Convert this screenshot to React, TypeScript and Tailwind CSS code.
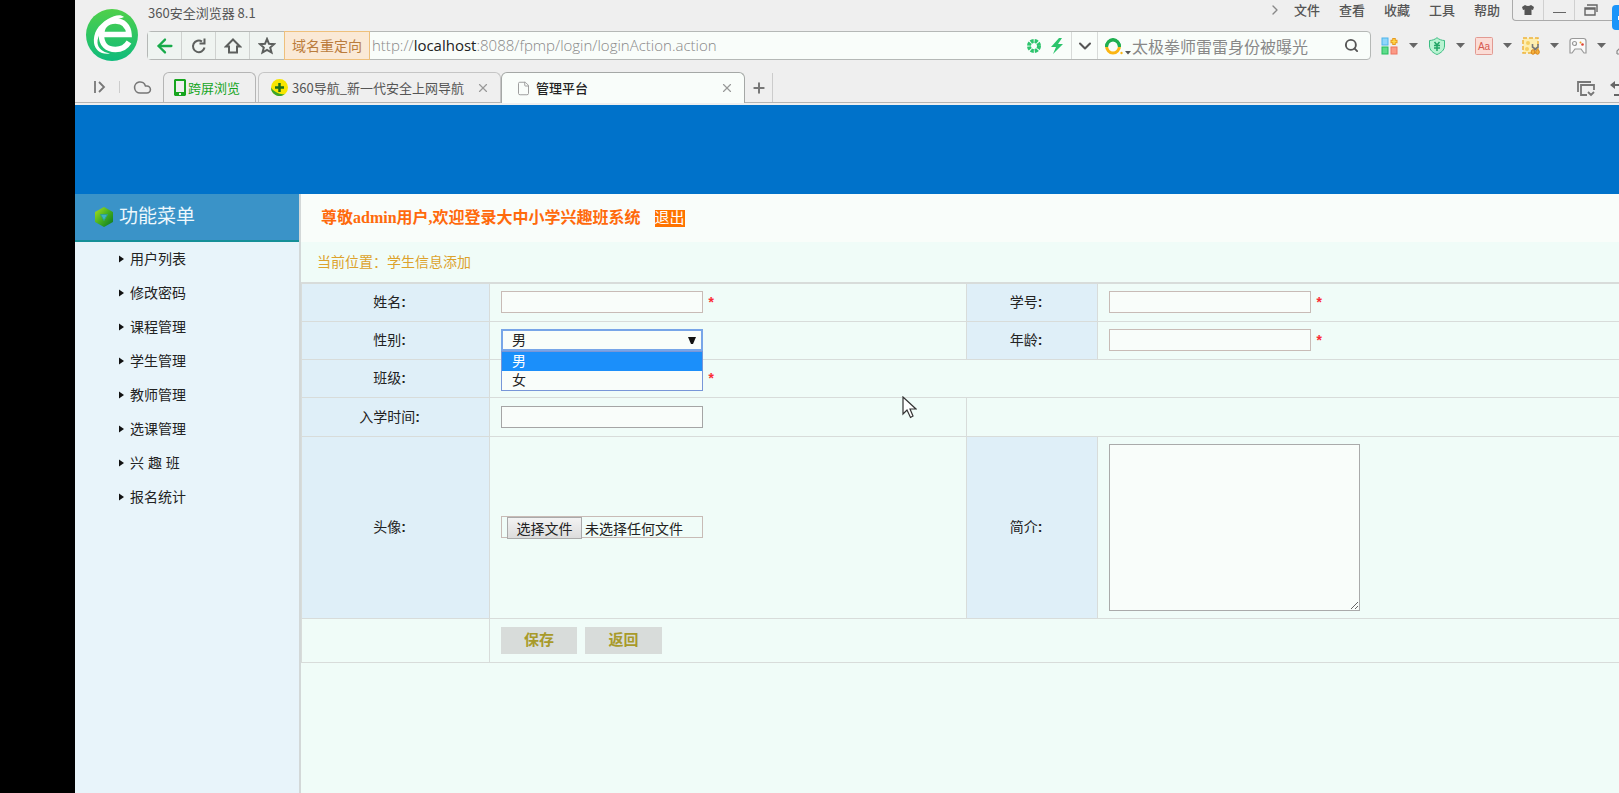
import React, { useState } from 'react';
import { ArrowLeft, ChevronDown, ChevronRight, Cloud, File, Plus, Search, X } from 'lucide-react';

const menus = ['文件', '查看', '收藏', '工具', '帮助'];

const sideItems = ['用户列表', '修改密码', '课程管理', '学生管理', '教师管理', '选课管理', '兴 趣 班', '报名统计'];

const genders = ['男', '女'];

const BrowserLogo = () => (
  <svg viewBox="0 0 52 52" className="size-[52px]">
    <defs>
      <linearGradient id="logo" x1="0" y1="0" x2="0" y2="1">
        <stop offset="0" stopColor="#4fd04a" />
        <stop offset="1" stopColor="#0fbb7c" />
      </linearGradient>
    </defs>
    <circle cx="26" cy="26" r="26" fill="url(#logo)" />
    <path
      d="M18 25.500H43C42.500 16.500 37 12 29.500 12C20.500 12 15.500 18 15.500 26.500C15.500 35.500 21 40.500 29.500 40.500C36 40.500 40 38 43 33"
      fill="none"
      stroke="#fff"
      strokeWidth="5.500"
    />
    <path d="M38 8C34 4.500 28 7 22 10C12 16 7 24 8 34C9 41 15 46 24 44.500C16 43 12 39 11.500 34C11 27 17 18 26 12.500C31 9.500 35 9.500 38 8Z" fill="#fff" />
  </svg>
);

const ReloadIcon = () => (
  <svg viewBox="0 0 18 18" className="size-[18px]" fill="none" stroke="#5c5f5d" strokeWidth="2">
    <path d="M14.500 10.500A5.800 5.800 0 1 1 12 4.500" />
    <path d="M9.500 6.500H14.500V1.500" />
  </svg>
);

const HomeIcon = () => (
  <svg viewBox="0 0 18 18" className="size-[18px]" fill="none" stroke="#5c5f5d" strokeWidth="2">
    <path d="M9 2.500L16 9.500H13V15.500H5V9.500H2Z" />
  </svg>
);

const StarIcon = () => (
  <svg viewBox="0 0 18 18" className="size-[18px]" fill="none" stroke="#5c5f5d" strokeWidth="2">
    <path d="M9 2L11 6.800L16 7.200L12.200 10.500L13.500 15.500L9 12.800L4.500 15.500L5.800 10.500L2 7.200L7 6.800Z" />
  </svg>
);

const Caret = () => (
  <svg viewBox="0 0 9 5" className="h-[5px] w-[9px] shrink-0">
    <path d="M0 0H9L4.500 5Z" fill="#666" />
  </svg>
);

const AppsIcon = () => (
  <svg viewBox="0 0 18 18" className="size-[18px]">
    <rect x="1" y="1" width="6" height="7" fill="#8fd6fa" stroke="#4db4ec" />
    <rect x="1" y="10" width="6" height="7" fill="#5fdc8c" stroke="#23bd5c" />
    <rect x="10" y="10" width="6" height="7" fill="#fb9a86" stroke="#ee7460" />
    <path d="M13 1V8M9.500 4.500H16.500" stroke="#e89a1c" strokeWidth="3.500" />
    <path d="M13 2V7M10.500 4.500H15.500" stroke="#ffd84a" strokeWidth="1.500" />
  </svg>
);

const ShieldIcon = () => (
  <svg viewBox="0 0 18 18" className="size-[18px]" fill="none" stroke="#22a565">
    <path d="M9 .7C11 2.500 14 3.500 16.500 3.500V9C16.500 13 13 16 9 17.500C5 16 1.500 13 1.500 9V3.500C4 3.500 7 2.500 9 .7Z" fill="#b9f3d2" stroke="#3dbd83" />
    <path d="M6.500 5L9 8L11.500 5M6 8.500H12M6 11H12M9 8V14" strokeWidth="1.500" />
  </svg>
);

const TranslateIcon = () => (
  <svg viewBox="0 0 18 18" className="size-[18px]">
    <rect x=".5" y=".5" width="17" height="17" rx="1" fill="#fbdcd6" stroke="#e29a92" />
    <text x="9" y="13" textAnchor="middle" fontSize="10" fontFamily="Liberation Sans, sans-serif" fill="#d6584e">Aa</text>
  </svg>
);

const CaptureIcon = () => (
  <svg viewBox="0 0 18 18" className="size-[18px]">
    <rect x="1" y="1" width="15" height="15" fill="#fdeeb0" stroke="#eeb43c" strokeWidth="1.500" strokeDasharray="4 2" />
    <circle cx="6" cy="6" r="2" fill="#f6cf61" />
    <circle cx="5" cy="12" r="2" fill="#f6cf61" />
    <path d="M10.500 7V10L14.500 13M16 7V10L12 13" fill="none" stroke="#777" strokeWidth="1.600" />
    <ellipse cx="11" cy="15" rx="1.800" ry="2.300" fill="#f6b23c" stroke="#d8841c" />
    <ellipse cx="15.500" cy="15" rx="1.800" ry="2.300" fill="#f6b23c" stroke="#d8841c" />
  </svg>
);

const GameIcon = () => (
  <svg viewBox="0 0 18 18" className="size-[18px]" fill="none" stroke="#999" strokeWidth="1.200">
    <path d="M1 16V4C1 2.500 2 1.500 3.500 1.500H14.500C16 1.500 17 2.500 17 4V16H15L12 12H6L3 16Z" fill="#fafafa" />
    <circle cx="5.500" cy="6.500" r="2" />
    <circle cx="11.500" cy="5.500" r="1" fill="#e8a020" stroke="none" />
    <circle cx="13.500" cy="7.500" r="1.300" fill="#e04030" stroke="none" />
  </svg>
);

const tools = [
  { name: '应用', icon: <AppsIcon /> },
  { name: '网银', icon: <ShieldIcon /> },
  { name: '翻译', icon: <TranslateIcon /> },
  { name: '截图', icon: <CaptureIcon /> },
  { name: '游戏', icon: <GameIcon /> },
];

const Browser = () => (
  <header className="h-[105px] overflow-hidden bg-[#efefef] font-['Noto_Sans_CJK_SC',sans-serif] text-[13px] text-[#555]">
    <div className="flex h-[72px]">
      <div className="w-[72px] shrink-0 pt-[9px] pl-[11px]">
        <BrowserLogo />
      </div>
      <div className="min-w-0 flex-1">
        <div className="flex h-[31px] items-start">
          <span className="pt-[3px] pl-px leading-[20px]">360安全浏览器 8.1</span>
          <nav className="ml-auto flex h-5 shrink-0 items-center gap-[19px] pr-3">
            <ChevronRight size={16} className="-mr-2 text-[#888]" />
            {menus.map((m) => (
              <button key={m} type="button" className="leading-[20px] font-medium">{m}</button>
            ))}
          </nav>
          <div className="flex h-[21px] w-[107px] shrink-0 divide-x divide-[#d0d0d0] rounded-bl-sm border-b border-l border-[#aaa]">
            <button type="button" aria-label="皮肤" className="flex w-[31px] items-center justify-center">
              <svg viewBox="0 0 14 12" className="h-3 w-3.5">
                <path d="M4 1Q7 3 10 1L13 3L12 6L10.500 5.500V11H3.500V5.500L2 6L1 3Z" fill="#555" />
              </svg>
            </button>
            <button type="button" aria-label="最小化" className="flex w-[31px] items-end justify-center pb-[7px]">
              <span className="h-px w-[13px] bg-[#666]" />
            </button>
            <button type="button" aria-label="还原" className="flex w-[31px] items-center justify-center">
              <svg viewBox="0 0 14 12" className="h-3 w-3.5" fill="none" stroke="#666" strokeWidth="1.400">
                <path d="M3 1H13V8M1 4H11V11H1ZM1 5H11" />
              </svg>
            </button>
          </div>
        </div>

        <div className="flex items-center">
          <div className="flex h-[29px] min-w-0 flex-1 rounded-sm border border-[#b5b8b6] bg-[#f9fdfa]">
            <div className="flex shrink-0 divide-x divide-[#cfd2d0] bg-[#eff4f1]">
              <button type="button" aria-label="后退" className="flex w-[34px] items-center justify-center">
                <ArrowLeft size={22} strokeWidth={2.5} className="text-[#17ab4a]" />
              </button>
              <button type="button" aria-label="刷新" className="flex w-[34px] items-center justify-center"><ReloadIcon /></button>
              <button type="button" aria-label="主页" className="flex w-[34px] items-center justify-center"><HomeIcon /></button>
              <button type="button" aria-label="收藏" className="flex w-[34px] items-center justify-center"><StarIcon /></button>
            </div>
            <span className="-my-px flex w-[86px] shrink-0 items-center justify-center border border-[#eec07c] bg-[#fae9d6] text-[14px] text-[#ba7c3c]">
              域名重定向
            </span>
            <div className="min-w-0 flex-1 truncate pl-[2px] font-['Open_Sans','Noto_Sans_CJK_SC',sans-serif] text-[15px] leading-[27px] font-light text-[#888]">
              http://<span className="font-normal text-[#222]">localhost</span>:8088/fpmp/login/loginAction.action
            </div>
            <div className="flex w-[45px] shrink-0 items-center gap-[8px]">
              <svg viewBox="0 0 16 16" className="size-4">
                <circle cx="8" cy="8" r="5" fill="none" stroke="#2cc46c" strokeWidth="4" strokeDasharray="3 .927" />
              </svg>
              <svg viewBox="0 0 14 16" className="h-4 w-3.5">
                <path d="M9 0L1 9H6L3 16L13 6H8L12 0Z" fill="#2cc46c" />
              </svg>
            </div>
            <button type="button" aria-label="地址列表" className="flex w-[27px] shrink-0 items-center justify-center border-x border-[#d8dbd9]">
              <ChevronDown size={20} strokeWidth={2.5} />
            </button>
            <div className="flex w-[272px] shrink-0 items-center pl-[7px]">
              <svg viewBox="0 0 26 18" className="h-[18px] w-[26px] shrink-0" fill="none" strokeWidth="3">
                <path d="M1.500 10A6.500 7 0 0 1 14.500 10" stroke="#1faf50" />
                <path d="M1.500 9A6.500 7 0 0 0 14.500 9" stroke="#fbb614" />
                <path d="M1.500 10A6.500 7.500 0 0 1 14.500 10" stroke="#1faf50" />
                <circle cx="16.500" cy="16" r="1.200" fill="#fbb614" />
                <path d="M20 14H26L23 17.500Z" fill="#555" />
              </svg>
              <input
                aria-label="搜索"
                placeholder="太极拳师雷雷身份被曝光"
                className="min-w-0 flex-1 bg-transparent pl-px text-[16px] leading-[24px] placeholder:text-[#888]"
              />
              <button type="button" aria-label="开始搜索" className="px-[11px]"><Search size={15} strokeWidth={3} /></button>
            </div>
          </div>
          <div className="flex w-[248px] shrink-0 items-center overflow-hidden pl-[10px]">
            {tools.map((t) => (
              <button key={t.name} type="button" aria-label={t.name} className="flex w-[47px] shrink-0 items-center gap-[10px]">
                {t.icon}
                <Caret />
              </button>
            ))}
            <svg viewBox="0 0 12 18" className="h-[18px] w-3 shrink-0" fill="none" stroke="#888" strokeWidth="1.200">
              <path d="M1 17V14L4 11M1 17H12" />
            </svg>
          </div>
        </div>
      </div>
    </div>

    <div className="flex h-[31px] items-end border-b border-[#b5b5b5]">
      <div className="flex h-[30px] w-[88px] shrink-0 items-center">
        <svg viewBox="0 0 12 12" className="ml-[19px] h-3 w-3" fill="none" stroke="#777" strokeWidth="1.800">
          <path d="M1 0V12M5 1L10 6L5 11" />
        </svg>
        <span className="mx-[13px] h-3 w-px bg-[#ccc]" />
        <Cloud size={19} className="text-[#777]" />
      </div>
      <button type="button" className="flex h-[30px] w-[93px] shrink-0 items-center gap-[2px] rounded-t-md border border-b-0 border-[#b5b5b5] pl-[10px] text-[#16a51e]">
        <svg viewBox="0 0 12 17" className="h-[17px] w-3">
          <path d="M1 0H11L12 1V16L11 17H1L0 16V1ZM2 2V13H10V2ZM5 14V16H7V14Z" fill="#16a51e" fillRule="evenodd" />
        </svg>
        跨屏浏览
      </button>
      <div className="ml-[2px] flex h-[30px] w-[243px] shrink-0 items-center rounded-t-md border border-b-0 border-[#c5c5c5] pr-[10px] pl-[12px]">
        <svg viewBox="0 0 17 17" className="mr-1 size-[17px]">
          <circle cx="8.500" cy="8.500" r="8.500" fill="#f7e600" />
          <path d="M0 8.500A8.500 8.500 0 0 0 14 15C9 16 3 13 0 8.500Z" fill="#3aa52c" />
          <path d="M8.500 4V13M4 8.500H13" stroke="#1b6e1b" strokeWidth="2.500" />
        </svg>
        <span className="whitespace-nowrap">360导航_新一代安全上网导航</span>
        <button type="button" aria-label="关闭标签" className="ml-auto"><X size={14} className="text-[#999]" /></button>
      </div>
      <div className="-mb-px flex h-[31px] w-[244px] shrink-0 items-center rounded-t-md border border-b-0 border-[#a5a8a6] bg-[#f9fdfa] pr-[10px] pl-[14px]">
        <File size={15} strokeWidth={1.5} className="mr-[5px] text-[#999]" />
        <span className="font-medium text-[#222]">管理平台</span>
        <button type="button" aria-label="关闭标签" className="ml-auto"><X size={14} className="text-[#999]" /></button>
      </div>
      <button type="button" aria-label="新标签" className="flex h-[29px] w-[28px] shrink-0 items-center justify-center border-r border-[#ccc]">
        <Plus size={16} strokeWidth={3} className="text-[#777]" />
      </button>
      <div className="ml-auto flex h-[27px] w-[42px] shrink-0 items-center gap-[15px] overflow-hidden">
        <svg viewBox="0 0 18 16" className="h-4 w-[18px] shrink-0" fill="none" stroke="#777" strokeWidth="1.800">
          <path d="M1 11V1H14M10 14H4V4H17V9M11 11L14 14L17 11" />
        </svg>
        <svg viewBox="0 0 18 16" className="h-4 w-[18px] shrink-0" fill="#666">
          <path d="M0 4L5 0V3H16V15H4V13H14V5H5V8Z" />
        </svg>
      </div>
    </div>
  </header>
);

const Sidebar = () => (
  <aside className="w-[226px] shrink-0 border-r-2 border-[#d3d8d8] bg-[#e8f4fa]">
    <h2 className="flex h-12 items-center gap-[6px] border-b-2 border-[#158f98] bg-[#3a93c8] pl-5 text-[19px] text-[#eef8fc]">
      <svg viewBox="0 0 18 20" className="h-5 w-[18px]">
        <defs>
          <linearGradient id="hex" x1="0" y1="0" x2="1" y2="1">
            <stop offset="0" stopColor="#a4dc1c" />
            <stop offset=".5" stopColor="#45b020" />
            <stop offset="1" stopColor="#0c7a20" />
          </linearGradient>
        </defs>
        <path d="M9 1L17 5.500V14.500L9 19L1 14.500V5.500Z" fill="url(#hex)" stroke="url(#hex)" strokeWidth="2" strokeLinejoin="round" />
        <path d="M5.500 7.500H12.500L9 13.500Z" fill="#3eb4c0" stroke="#2fa089" strokeLinejoin="round" />
      </svg>
      功能菜单
    </h2>
    <ul>
      {sideItems.map((item) => (
        <li key={item}>
          <a href="#" className="flex h-[34px] items-center gap-[6px] pl-11 text-[14px] text-[#222]">
            <svg viewBox="0 0 5 8" className="h-2 w-[5px]">
              <path d="M0 0.500L5 4L0 7.500Z" fill="#111" />
            </svg>
            {item}
          </a>
        </li>
      ))}
    </ul>
  </aside>
);

const labelCell = 'border border-[#d8dcda] bg-[#dfeff8] pr-3 text-center font-normal';
const cell = 'border border-[#d8dcda] px-[11px]';
const field = 'h-[22px] w-[202px] border border-[#c8bbb6] bg-[#f9fdfa] px-2 align-middle';

const Star = () => <span className="ml-1 inline-block pt-1 align-middle font-['Liberation_Mono',monospace] font-bold text-red-500">*</span>;

const StudentForm = () => {
  const [gender, setGender] = useState('男');

  return (
    <form onSubmit={(e) => e.preventDefault()} className="overflow-hidden">
      {/* wider than its column, so the right edge runs out of the window */}
      <table className="-mr-3 w-[calc(100%+12px)] table-fixed border-collapse border-t-2 border-[#d8dcda] text-[14px] leading-[20px] text-[#222]">
        <colgroup>
          <col className="w-[188px]" />
          <col className="w-[477px]" />
          <col className="w-[131px]" />
          <col />
        </colgroup>
        <tbody>
          <tr className="h-[38px]">
            <th className={labelCell}><label htmlFor="name">姓名<b>:</b></label></th>
            <td className={cell}><input id="name" className={field} /><Star /></td>
            <th className={labelCell}><label htmlFor="no">学号<b>:</b></label></th>
            <td className={cell}><input id="no" className={field} /><Star /></td>
          </tr>
          <tr className="h-[38px]">
            <th className={labelCell}><label htmlFor="gender">性别<b>:</b></label></th>
            <td className={cell}>
              <div className="relative w-[202px]">
                <select
                  id="gender"
                  value={gender}
                  onChange={(e) => setGender(e.target.value)}
                  className="block h-[22px] w-full appearance-none border-2 border-[#78a5e8] bg-[#f9fdfa] px-[9px] text-[14px] leading-[18px] outline-none"
                >
                  {genders.map((g) => <option key={g}>{g}</option>)}
                </select>
                <svg viewBox="0 0 8 7" className="pointer-events-none absolute top-2 right-[7px] h-[7px] w-2">
                  <path d="M0 0H8L5 7H3Z" fill="#111" />
                </svg>
                <ul className="absolute top-full left-0 z-10 w-full border border-[#7896d8] bg-[#f9fdfa]">
                  {genders.map((g) => (
                    <li
                      key={g}
                      onClick={() => setGender(g)}
                      className={g === gender ? 'h-[19px] bg-[#1b8ffa] px-[10px] leading-[19px] text-white' : 'h-[19px] px-[10px] leading-[19px]'}
                    >
                      {g}
                    </li>
                  ))}
                </ul>
              </div>
            </td>
            <th className={labelCell}><label htmlFor="age">年龄<b>:</b></label></th>
            <td className={cell}><input id="age" className={field} /><Star /></td>
          </tr>
          <tr className="h-[38px]">
            <th className={labelCell}><label htmlFor="clazz">班级<b>:</b></label></th>
            <td className={cell} colSpan={3}><select id="clazz" className={field} /><Star /></td>
          </tr>
          <tr className="h-[39px]">
            <th className={labelCell}><label htmlFor="date">入学时间<b>:</b></label></th>
            <td className={cell}>
              <input id="date" className="h-[22px] w-[202px] border border-[#a5a5a5] bg-[#f9fdfa] px-2 align-middle" />
            </td>
            <td className={cell} colSpan={2} />
          </tr>
          <tr className="h-[182px]">
            <th className={labelCell}><label htmlFor="photo">头像<b>:</b></label></th>
            <td className={cell}>
              <label className="flex h-[22px] w-[202px] items-start border border-[#c8bbb6] pl-[5px]">
                <input id="photo" type="file" className="sr-only" />
                <span className="h-[22px] w-[75px] shrink-0 border border-[#aaa] bg-linear-to-b from-[#f3f3f3] to-[#dcdcdc] text-center leading-[22px]">
                  选择文件
                </span>
                <span className="ml-[3px] leading-[24px] whitespace-nowrap">未选择任何文件</span>
              </label>
            </td>
            <th className={labelCell}><label htmlFor="intro">简介<b>:</b></label></th>
            <td className={cell}>
              <textarea id="intro" className="block h-[167px] w-[251px] border border-[#aaa] bg-[#f9fdfa]" />
            </td>
          </tr>
          <tr className="h-11">
            <td className={cell} />
            <td className={cell} colSpan={3}>
              <div className="flex gap-2 text-[15px] font-bold text-[#a89a2a]">
                <button type="submit" className="h-[27px] w-[76px] bg-[#d8dcda]">保存</button>
                <button type="button" className="h-[27px] w-[77px] bg-[#d8dcda]">返回</button>
              </div>
            </td>
          </tr>
        </tbody>
      </table>
    </form>
  );
};

export default function App() {
  return (
    <div className="relative flex h-screen overflow-hidden bg-black pl-[75px] font-['Liberation_Sans','Noto_Sans_CJK_SC',sans-serif]">
      <div className="flex min-w-0 flex-1 flex-col bg-[#f0fcf8]">
        <Browser />
        <div className="h-[89px] shrink-0 bg-[#0072ca]" />
        <div className="flex min-h-0 flex-1">
          <Sidebar />
          <main className="min-w-0 flex-1">
            <div className="flex h-12 items-center gap-[14px] bg-[#f9fdfa] pl-5 font-['Liberation_Serif','Noto_Sans_CJK_SC',serif] text-[16px] font-bold text-[#ff6a0c]">
              <span>尊敬admin用户,欢迎登录大中小学兴趣班系统</span>
              <a href="#" className="bg-[#ff7300] text-[15px] leading-[17px] font-normal text-white">退出</a>
            </div>
            <p className="h-10 pl-4 text-[14px] leading-[40px] text-[#dda22c]">当前位置：学生信息添加</p>
            <StudentForm />
          </main>
        </div>
      </div>

      {/* floating widget */}
      <div className="absolute top-[5px] right-0 flex h-[25px] w-[7px] items-center justify-end rounded-l bg-[#1b95fa]">
        <span className="h-1 w-px bg-white" />
      </div>

      {/* mouse pointer */}
      <svg viewBox="0 0 15 23" className="pointer-events-none absolute top-[396px] left-[902px] h-[23px] w-[15px]">
        <path d="M1 1V18L5 14L8.500 21.500L11 20L8 13H14Z" fill="#fff" stroke="#333" strokeWidth="1.200" />
      </svg>
    </div>
  );
}
